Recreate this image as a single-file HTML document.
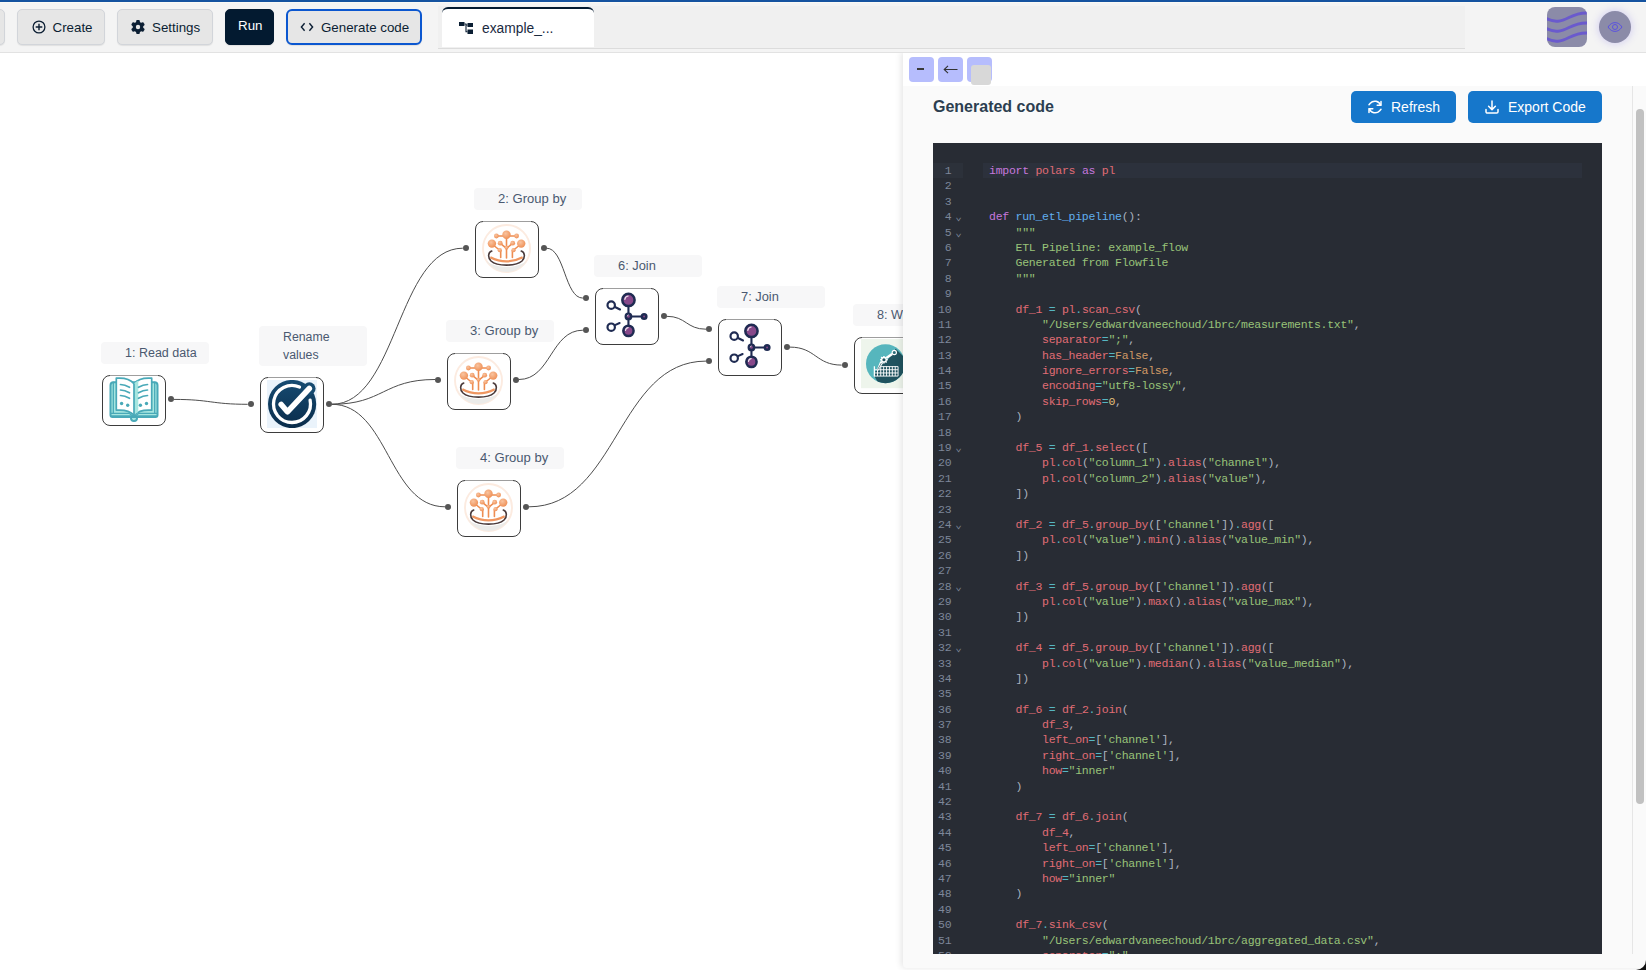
<!DOCTYPE html>
<html>
<head>
<meta charset="utf-8">
<title>Flow designer</title>
<style>
*{box-sizing:border-box;margin:0;padding:0}
html,body{width:1646px;height:970px;overflow:hidden;background:#fff;font-family:"Liberation Sans",sans-serif}
#app{position:relative;width:1646px;height:970px;overflow:hidden;background:#fff}
.abs{position:absolute}
/* top bar */
#topline{left:0;top:0;width:1646px;height:2px;background:#1553a0}
#header{left:0;top:2px;width:1646px;height:51px;background:#f4f4f4;border-bottom:1px solid #e2e2e2;border-top:1px solid #fafaf6}
.btn{position:absolute;top:9px;height:36px;background:#e6e6e6;border:1px solid #d2d5da;border-radius:5px;box-shadow:0 1px 1px rgba(0,0,0,.08);color:#0b1e33;font-size:13.33px;line-height:34px;white-space:nowrap}
.btn span{position:absolute;top:1px}
#run{background:#031a30;border-color:#031a30;color:#fff}
#run span{top:-1px}
#gen{border:2px solid #0b57d0;border-radius:6px;line-height:32px}
#strip{left:438px;top:6px;width:1027px;height:43px;background:#f0f0f0;border-bottom:1px solid #dcdcdc}
#tab{left:442px;top:7px;width:152px;height:40px;background:#fff;border-top:2px solid #031a30;border-radius:6px 6px 0 0;font-size:14px;color:#1a2a3f}
/* canvas */
.lbl{position:absolute;width:108px;height:22px;background:#f7f7f8;border-radius:4px;font-size:12.400px;line-height:22px;color:#4a5970;white-space:nowrap}
.node{position:absolute;width:64px;height:57px;background:#fff;border:1px solid #3d3d3d;border-radius:8px}
.node:before{content:'';position:absolute;left:7px;right:7px;top:-1px;height:1px;background:rgba(255,255,255,.5)}
.hd{position:absolute;width:6px;height:6px;border-radius:50%;background:#555}
/* panel */
#panel{left:903px;top:52px;width:743px;height:916px;background:#fafafa;box-shadow:-2px 0 6px rgba(0,0,0,.10);border-radius:0 0 0 4px}
#ptop{left:0;top:0;width:743px;height:34px;background:#fff}
.pb{position:absolute;top:5px;width:25px;height:25px;background:#b6bdfd;border-radius:4px}
#title{left:30px;top:46px;font-size:16px;font-weight:bold;color:#2c3e50;white-space:nowrap}
.bbtn{position:absolute;top:39px;height:32px;background:#1677cb;border-radius:5px;color:#fff;font-size:14px;line-height:32px;white-space:nowrap}
.bbtn span{position:absolute;top:0}
#sbar{left:729px;top:34px;width:14px;height:868px;border-left:1px solid #e6e6e6;background:#fafafa}
#thumb{left:733px;top:57px;width:8px;height:695px;border-radius:4px;background:#c1c1c1}
#code{left:30px;top:91px;width:669px;height:811px;background:#282c34;overflow:hidden;font-family:"Liberation Mono",monospace;font-size:11.500px;letter-spacing:-.27px;color:#abb2bf}
#gut{left:0;top:20px;width:30px}
.gl{position:relative;height:15.4px;line-height:16.8px;color:#7d8799;white-space:pre}
.gl b{position:absolute;right:11.700px;top:0;font-weight:normal}
.gl i{position:absolute;left:22.300px;top:.1px;font-style:normal;font-size:11px;letter-spacing:0}
.ga{background:#2c313a}
#lines{left:50px;top:20px;width:599px}
.cl{height:15.4px;line-height:16.8px;padding-left:6px;white-space:pre}
.ca{background:#2c313c}
.k{color:#c678dd}.v{color:#e06c75}.f{color:#61afef}.s{color:#98c379}.o{color:#56b6c2}.a{color:#d19a66}.n{color:#e5c07b}
</style>
</head>
<body>
<div id="app">
  <!-- CANVAS -->
  <div id="canvas" class="abs" style="left:0;top:0;width:903px;height:970px;overflow:hidden">

<svg width="0" height="0" style="position:absolute">
<defs>
<radialGradient id="og" cx="40%" cy="35%" r="70%"><stop offset="0" stop-color="#f9c4a0"/><stop offset="1" stop-color="#ee8d52"/></radialGradient>
<linearGradient id="rg" x1="0" y1="0" x2="0" y2="1"><stop offset="0" stop-color="#164b72"/><stop offset="1" stop-color="#0a2c4a"/></linearGradient>
<clipPath id="gc"><circle cx="24" cy="24" r="23.500"/></clipPath>
<clipPath id="wc"><circle cx="20" cy="20" r="20"/></clipPath>
<symbol id="groupby" viewBox="-0.5 -0.5 49 49">
  <circle cx="24" cy="24" r="23.500" fill="#fff" stroke="#fcebe0" stroke-width="1.900"/>
  <g clip-path="url(#gc)"><path d="M0 32C8 46 40 46 48 32V48H0z" fill="#ebebe9"/></g>
  <g stroke="#ee8d52" stroke-width="1.600" fill="none" stroke-linecap="round">
    <path d="M24 10v23.500"/><path d="M14 11.500h20"/>
    <path d="M18.200 26.500v6.500M29.900 26.500v6.500"/>
    <path d="M9.500 19.500l8 6.500M38.500 19.500l-8 6.500"/>
    <path d="M17.800 18.800l6.200 5M30.200 18.800l-6.200 5"/>
  </g>
  <g fill="url(#og)">
    <circle cx="24" cy="10.300" r="4.200"/><circle cx="13.900" cy="11.500" r="2.400"/><circle cx="34.100" cy="11.500" r="2.400"/>
    <circle cx="9.400" cy="19.100" r="4.200"/><circle cx="38.700" cy="19.100" r="4.200"/>
    <circle cx="17.700" cy="18.700" r="2.400"/><circle cx="30.200" cy="18.700" r="2.400"/>
    <circle cx="24" cy="23.200" r="1.900"/><circle cx="17.300" cy="25.700" r="2.100"/><circle cx="31" cy="25.700" r="2.100"/>
  </g>
  <path d="M7.800 32.700Q24 41.100 40.200 32.700" fill="none" stroke="#ef9660" stroke-width="2.300"/>
  <path d="M9.200 26.600C5.500 28 5 33 8.500 36.500C14.500 42 33.500 42 39.500 36.500C43 33 42.500 28 38.800 26.600" fill="none" stroke="#4b3b3b" stroke-width="1.600" stroke-linecap="round"/>
</symbol>
<symbol id="join" viewBox="0 0 62 55">
  <g stroke="#1f2b52" stroke-width="2.100" fill="none" stroke-linecap="round">
    <path d="M32.450 11V42M32.450 27.440H48"/>
    <path d="M19.500 18.200l4.500 2.300M19.500 35.900l4.100-1.900"/>
  </g>
  <circle cx="32.450" cy="10.950" r="6.150" fill="#87488a" stroke="#1f2b52" stroke-width="2.500"/>
  <path d="M28.800 10.400a3.800 3.800 0 0 1 3.300-3.400" fill="none" stroke="#fff" stroke-width="1.200" stroke-linecap="round" opacity=".85"/>
  <circle cx="32.450" cy="41.870" r="5.150" fill="#87488a" stroke="#1f2b52" stroke-width="2.500"/>
  <path d="M29.500 41.400a3.100 3.100 0 0 1 2.700-2.800" fill="none" stroke="#fff" stroke-width="1.100" stroke-linecap="round" opacity=".85"/>
  <circle cx="32.450" cy="27.440" r="2.650" fill="#87488a" stroke="#1f2b52" stroke-width="2.500"/>
  <path d="M31.200 27a1.400 1.400 0 0 1 1.100-1.200" fill="none" stroke="#fff" stroke-width=".8" stroke-linecap="round" opacity=".8"/>
  <circle cx="48.100" cy="27.440" r="2.250" fill="#87488a" stroke="#1f2b52" stroke-width="2.500"/>
  <circle cx="15.200" cy="16.140" r="3.700" fill="#fff" stroke="#1f2b52" stroke-width="2.200"/>
  <circle cx="15.200" cy="38.200" r="3.700" fill="#fff" stroke="#1f2b52" stroke-width="2.200"/>
</symbol>
<symbol id="book" viewBox="0 0 50 45">
  <path d="M0.500 8.200a4 4 0 0 1 4-4H45.500a4 4 0 0 1 4 4V38a3 3 0 0 1-3 3H29a4 4 0 0 1-8 0H3.500a3 3 0 0 1-3-3z" fill="#49a9b8"/>
  <path d="M2.500 8.200a2 2 0 0 1 2-2H45.500a2 2 0 0 1 2 2V38.300H2.500z" fill="#a6e6e0"/>
  <path d="M2 36.300H20l5 3.500l5-3.500H48" fill="none" stroke="#49a9b8" stroke-width="1.200"/>
  <path d="M4.300 4.700V36M45.700 4.700V36" stroke="#49a9b8" stroke-width="1.300" fill="none"/>
  <path d="M7.300 1.200C14 .6 21 2 25 6.600C29 2 36 .6 42.700 1.200V33.200C36 32.600 29 34 25 38C21 34 14 32.600 7.300 33.200z" fill="#fff" stroke="#49a9b8" stroke-width="1.700" stroke-linejoin="round"/>
  <path d="M25 6.600C26.500 5 28 4 29.300 3.400V35C28 35.600 26.500 36.600 25 38z" fill="#a6e6e0"/>
  <path d="M25 6.600V42" stroke="#49a9b8" stroke-width="1.700" fill="none"/>
  <path d="M22.300 41a2.700 2.700 0 0 0 5.400 0" fill="#a6e6e0" stroke="#49a9b8" stroke-width="1.300"/>
  <g stroke="#49a9b8" stroke-width="1.700" fill="none" stroke-linecap="round">
    <path d="M11.500 7.500C15 7.500 18 8.800 20.500 10.300M11.500 13C15 13 18 14.300 20.500 15.800M11.500 18.500C15 18.500 18 19.800 20.500 21.300"/>
    <path d="M38.500 7.500C35 7.500 32 8.800 29.500 10.300M38.500 13C35 13 32 14.300 29.500 15.800M38.500 18.500C35 18.500 32 19.800 29.500 21.300"/>
  </g>
  <g fill="#49a9b8"><circle cx="12.600" cy="26.500" r="1.700"/><circle cx="18.700" cy="28.200" r="1.700"/><circle cx="31.400" cy="28.200" r="1.700"/><circle cx="37.500" cy="26.500" r="1.700"/></g>
</symbol>
<symbol id="rename" viewBox="0 0 50 48">
  <rect width="50" height="48" fill="#eaf3fb"/>
  <circle cx="25.100" cy="24.050" r="24.100" fill="url(#rg)"/>
  <circle cx="42.300" cy="8.600" r="6.300" fill="#154a70"/>
  <path d="M32.500 7.100A18.500 18.500 0 1 0 43.100 20.150" fill="none" stroke="#fff" stroke-width="3.300" stroke-linecap="round"/>
  <path d="M14.200 24.500L20.400 31.800L42.300 8.500" fill="none" stroke="#fff" stroke-width="5.600" stroke-linecap="round" stroke-linejoin="round"/>
</symbol>
<symbol id="write" viewBox="0 0 52 49.400">
  <rect width="52" height="49.400" fill="#eef5ec"/>
  <g transform="translate(5 5.300) scale(.975)">
    <circle cx="20" cy="20" r="20" fill="#56b6bd"/>
    <g clip-path="url(#wc)"><path d="M30.500 4.500L52 26V52H20L8.400 32.600V29L13 25L17 19L22 16z" fill="#20535f"/></g>
    <g fill="none" stroke="#fff" stroke-width=".95"><path d="M8.400 26.100H32.900M8.400 29.400H32.900M8.400 32.600H32.900M15.100 22.900H32.900V32.600"/><path d="M11.800 26.100v6.500M15.100 22.900v9.700M18.100 22.900v9.700M21.100 22.900v9.700M24 22.900v9.700M27 22.900v9.700M30 22.900v9.700"/></g>
    <path d="M8.600 22.500v10.600" stroke="#fff" stroke-width="1.300"/>
    <path d="M14.600 17.300L17.600 19.300L12.300 27.300L10.900 26.600z" fill="#fff"/>
    <path d="M15.800 19.200L12 25.800" stroke="#20535f" stroke-width=".7"/>
    <g stroke="#fff" stroke-width="1.500"><path d="M18.400 11.900v7.800M14.500 15.800h7.800M15.600 13l5.600 5.600M21.200 13l-5.600 5.600"/></g>
    <circle cx="18.400" cy="15.800" r="2.900" fill="#fff"/>
    <circle cx="18.400" cy="15.800" r="1.600" fill="#20535f"/>
    <path d="M21.300 13.800L26.800 10" stroke="#fff" stroke-width="2.500"/>
    <circle cx="29" cy="8.400" r="2.200" fill="#2b6d78" stroke="#fff" stroke-width="1.200"/>
  </g>
</symbol>
</defs>
</svg>

<div class="abs" style="left:0;top:0;width:903px;height:970px">
<svg class="abs" style="left:0;top:0" width="903" height="970" viewBox="0 0 903 970"><g fill="none" stroke="#4d4d4d" stroke-width="1"><path d="M173.8 399.4C210.8 399.4 210.8 404.3 247.7 404.3"/><path d="M331.8 404.3C397.3 404.3 397.3 248.2 462.8 248.2"/><path d="M331.8 404.3C383.4 404.3 383.4 379.5 435.0 379.5"/><path d="M331.8 404.3C388.4 404.3 388.4 506.8 445.0 506.8"/><path d="M546.5 248.2C564.7 248.2 564.7 298.1 582.9 298.1"/><path d="M518.9 379.5C550.9 379.5 550.9 330.2 582.9 330.2"/><path d="M666.6 316.3C686.3 316.3 686.3 329.2 706.0 329.2"/><path d="M529.0 506.8C617.5 506.8 617.5 361.1 706.0 361.1"/><path d="M789.8 347.1C815.8 347.1 815.8 365.1 841.7 365.1"/></g></svg>
<div class="lbl" style="left:101px;top:341.5px;padding-left:24px;font-size:12.5px">1: Read data</div>
<div class="node" style="left:102px;top:375px;width:64px;height:51px"><svg class="abs" style="left:6px;top:1.0px" width="50" height="45"><use href="#book"/></svg></div>
<div class="lbl" style="left:259px;top:325.5px;height:40px;line-height:18px;padding:2px 0 0 24px;font-size:12.3px">Rename<br>values</div>
<div class="node" style="left:260px;top:377px;width:64px;height:56px"><svg class="abs" style="left:6px;top:2.3px" width="50" height="48"><use href="#rename"/></svg></div>
<div class="lbl" style="left:474px;top:187.5px;padding-left:24px;font-size:13.05px">2: Group by</div>
<div class="node" style="left:475px;top:221px;width:64px;height:57px"><svg class="abs" style="left:6px;top:1.9px" width="49" height="49"><use href="#groupby"/></svg></div>
<div class="lbl" style="left:446px;top:319.5px;padding-left:24px;font-size:13.05px">3: Group by</div>
<div class="node" style="left:447px;top:353px;width:64px;height:57px"><svg class="abs" style="left:6px;top:1.9px" width="49" height="49"><use href="#groupby"/></svg></div>
<div class="lbl" style="left:456px;top:446.5px;padding-left:24px;font-size:13.05px">4: Group by</div>
<div class="node" style="left:457px;top:480px;width:64px;height:57px"><svg class="abs" style="left:6px;top:1.9px" width="49" height="49"><use href="#groupby"/></svg></div>
<div class="lbl" style="left:594px;top:254.5px;padding-left:24px;font-size:12.85px">6: Join</div>
<div class="node" style="left:595px;top:288px;width:64px;height:57px"><svg class="abs" style="left:0px;top:0px" width="62" height="55"><use href="#join"/></svg></div>
<div class="lbl" style="left:717px;top:285.5px;padding-left:24px;font-size:12.85px">7: Join</div>
<div class="node" style="left:718px;top:319px;width:64px;height:57px"><svg class="abs" style="left:0px;top:0px" width="62" height="55"><use href="#join"/></svg></div>
<div class="lbl" style="left:853px;top:303.5px;padding-left:24px;font-size:12.7px">8: Write data</div>
<div class="node" style="left:854px;top:337px;width:64px;height:57px"><svg class="abs" style="left:5.9px;top:1.3px" width="52" height="49.4"><use href="#write"/></svg></div>
<div class="hd" style="left:167.8px;top:396.4px"></div>
<div class="hd" style="left:247.7px;top:401.3px"></div>
<div class="hd" style="left:325.8px;top:401.3px"></div>
<div class="hd" style="left:462.8px;top:245.2px"></div>
<div class="hd" style="left:540.5px;top:245.2px"></div>
<div class="hd" style="left:435.0px;top:376.5px"></div>
<div class="hd" style="left:512.9px;top:376.5px"></div>
<div class="hd" style="left:445.0px;top:503.8px"></div>
<div class="hd" style="left:523.0px;top:503.8px"></div>
<div class="hd" style="left:582.9px;top:295.1px"></div>
<div class="hd" style="left:582.9px;top:327.2px"></div>
<div class="hd" style="left:660.6px;top:313.3px"></div>
<div class="hd" style="left:706.0px;top:326.2px"></div>
<div class="hd" style="left:706.0px;top:358.1px"></div>
<div class="hd" style="left:783.8px;top:344.1px"></div>
<div class="hd" style="left:841.7px;top:362.1px"></div>
</div>
  </div>

  <!-- PANEL -->
  <div id="panel" class="abs">
    <div id="ptop" class="abs"></div>
    <div class="pb" style="left:6px"><div class="abs" style="left:8px;top:11px;width:7px;height:2px;background:#3a3a3a"></div></div>
    <div class="pb" style="left:35px"><svg class="abs" style="left:5px;top:7px" width="15" height="11" viewBox="0 0 15 11"><path d="M14.500 5.500H1.200M5 1.800L1.200 5.500L5 9.200" fill="none" stroke="#333" stroke-width="1.100"/></svg></div>
    <div class="pb" style="left:64px"></div>
    <div class="abs" style="left:68px;top:13px;width:20px;height:20px;background:#d8d8d8;border-radius:3px"></div>
    <div id="title" class="abs">Generated code</div>
    <div class="bbtn" style="left:448px;width:105px">
      <svg class="abs" style="left:16px;top:8px" width="16" height="16" viewBox="0 0 16 16"><g fill="none" stroke="#fff" stroke-width="1.500" stroke-linecap="round" stroke-linejoin="round"><path d="M14 2.500v3.800h-3.800"/><path d="M2 13.500V9.700h3.800"/><path d="M13.600 6.300A6 6 0 0 0 3.300 4.300L2 5.800M14 10.200l-1.300 1.500A6 6 0 0 1 2.400 9.700"/></g></svg>
      <span style="left:40px">Refresh</span>
    </div>
    <div class="bbtn" style="left:565px;width:134px">
      <svg class="abs" style="left:16px;top:8px" width="16" height="16" viewBox="0 0 16 16"><g fill="none" stroke="#fff" stroke-width="1.500" stroke-linecap="round" stroke-linejoin="round"><path d="M8 2v8.500M4.600 7.200L8 10.600l3.400-3.400M2 10.500v2.200a1.300 1.300 0 0 0 1.300 1.300h9.400a1.300 1.300 0 0 0 1.300-1.300v-2.200"/></g></svg>
      <span style="left:40px">Export Code</span>
    </div>
    <div id="code" class="abs">
      <div id="gut" class="abs">
<div class="gl ga"><b>1</b></div>
<div class="gl"><b>2</b></div>
<div class="gl"><b>3</b></div>
<div class="gl"><b>4</b><i>&#8964;</i></div>
<div class="gl"><b>5</b><i>&#8964;</i></div>
<div class="gl"><b>6</b></div>
<div class="gl"><b>7</b></div>
<div class="gl"><b>8</b></div>
<div class="gl"><b>9</b></div>
<div class="gl"><b>10</b></div>
<div class="gl"><b>11</b></div>
<div class="gl"><b>12</b></div>
<div class="gl"><b>13</b></div>
<div class="gl"><b>14</b></div>
<div class="gl"><b>15</b></div>
<div class="gl"><b>16</b></div>
<div class="gl"><b>17</b></div>
<div class="gl"><b>18</b></div>
<div class="gl"><b>19</b><i>&#8964;</i></div>
<div class="gl"><b>20</b></div>
<div class="gl"><b>21</b></div>
<div class="gl"><b>22</b></div>
<div class="gl"><b>23</b></div>
<div class="gl"><b>24</b><i>&#8964;</i></div>
<div class="gl"><b>25</b></div>
<div class="gl"><b>26</b></div>
<div class="gl"><b>27</b></div>
<div class="gl"><b>28</b><i>&#8964;</i></div>
<div class="gl"><b>29</b></div>
<div class="gl"><b>30</b></div>
<div class="gl"><b>31</b></div>
<div class="gl"><b>32</b><i>&#8964;</i></div>
<div class="gl"><b>33</b></div>
<div class="gl"><b>34</b></div>
<div class="gl"><b>35</b></div>
<div class="gl"><b>36</b></div>
<div class="gl"><b>37</b></div>
<div class="gl"><b>38</b></div>
<div class="gl"><b>39</b></div>
<div class="gl"><b>40</b></div>
<div class="gl"><b>41</b></div>
<div class="gl"><b>42</b></div>
<div class="gl"><b>43</b></div>
<div class="gl"><b>44</b></div>
<div class="gl"><b>45</b></div>
<div class="gl"><b>46</b></div>
<div class="gl"><b>47</b></div>
<div class="gl"><b>48</b></div>
<div class="gl"><b>49</b></div>
<div class="gl"><b>50</b></div>
<div class="gl"><b>51</b></div>
<div class="gl"><b>52</b></div>
      </div>
      <div id="lines" class="abs">
<div class="cl ca"><span class="k">import</span> <span class="v">polars</span> <span class="k">as</span> <span class="v">pl</span></div>
<div class="cl"></div>
<div class="cl"></div>
<div class="cl"><span class="k">def</span> <span class="f">run_etl_pipeline</span>():</div>
<div class="cl">    <span class="s">"""</span></div>
<div class="cl">    <span class="s">ETL Pipeline: example_flow</span></div>
<div class="cl">    <span class="s">Generated from Flowfile</span></div>
<div class="cl">    <span class="s">"""</span></div>
<div class="cl"></div>
<div class="cl">    <span class="v">df_1</span> <span class="o">=</span> <span class="v">pl</span><span class="o">.</span><span class="v">scan_csv</span>(</div>
<div class="cl">        <span class="s">"/Users/edwardvaneechoud/1brc/measurements.txt"</span>,</div>
<div class="cl">        <span class="v">separator</span><span class="o">=</span><span class="s">";"</span>,</div>
<div class="cl">        <span class="v">has_header</span><span class="o">=</span><span class="a">False</span>,</div>
<div class="cl">        <span class="v">ignore_errors</span><span class="o">=</span><span class="a">False</span>,</div>
<div class="cl">        <span class="v">encoding</span><span class="o">=</span><span class="s">"utf8-lossy"</span>,</div>
<div class="cl">        <span class="v">skip_rows</span><span class="o">=</span><span class="n">0</span>,</div>
<div class="cl">    )</div>
<div class="cl"></div>
<div class="cl">    <span class="v">df_5</span> <span class="o">=</span> <span class="v">df_1</span><span class="o">.</span><span class="v">select</span>([</div>
<div class="cl">        <span class="v">pl</span><span class="o">.</span><span class="v">col</span>(<span class="s">"column_1"</span>)<span class="o">.</span><span class="v">alias</span>(<span class="s">"channel"</span>),</div>
<div class="cl">        <span class="v">pl</span><span class="o">.</span><span class="v">col</span>(<span class="s">"column_2"</span>)<span class="o">.</span><span class="v">alias</span>(<span class="s">"value"</span>),</div>
<div class="cl">    ])</div>
<div class="cl"></div>
<div class="cl">    <span class="v">df_2</span> <span class="o">=</span> <span class="v">df_5</span><span class="o">.</span><span class="v">group_by</span>([<span class="s">'channel'</span>])<span class="o">.</span><span class="v">agg</span>([</div>
<div class="cl">        <span class="v">pl</span><span class="o">.</span><span class="v">col</span>(<span class="s">"value"</span>)<span class="o">.</span><span class="v">min</span>()<span class="o">.</span><span class="v">alias</span>(<span class="s">"value_min"</span>),</div>
<div class="cl">    ])</div>
<div class="cl"></div>
<div class="cl">    <span class="v">df_3</span> <span class="o">=</span> <span class="v">df_5</span><span class="o">.</span><span class="v">group_by</span>([<span class="s">'channel'</span>])<span class="o">.</span><span class="v">agg</span>([</div>
<div class="cl">        <span class="v">pl</span><span class="o">.</span><span class="v">col</span>(<span class="s">"value"</span>)<span class="o">.</span><span class="v">max</span>()<span class="o">.</span><span class="v">alias</span>(<span class="s">"value_max"</span>),</div>
<div class="cl">    ])</div>
<div class="cl"></div>
<div class="cl">    <span class="v">df_4</span> <span class="o">=</span> <span class="v">df_5</span><span class="o">.</span><span class="v">group_by</span>([<span class="s">'channel'</span>])<span class="o">.</span><span class="v">agg</span>([</div>
<div class="cl">        <span class="v">pl</span><span class="o">.</span><span class="v">col</span>(<span class="s">"value"</span>)<span class="o">.</span><span class="v">median</span>()<span class="o">.</span><span class="v">alias</span>(<span class="s">"value_median"</span>),</div>
<div class="cl">    ])</div>
<div class="cl"></div>
<div class="cl">    <span class="v">df_6</span> <span class="o">=</span> <span class="v">df_2</span><span class="o">.</span><span class="v">join</span>(</div>
<div class="cl">        <span class="v">df_3</span>,</div>
<div class="cl">        <span class="v">left_on</span><span class="o">=</span>[<span class="s">'channel'</span>],</div>
<div class="cl">        <span class="v">right_on</span><span class="o">=</span>[<span class="s">'channel'</span>],</div>
<div class="cl">        <span class="v">how</span><span class="o">=</span><span class="s">"inner"</span></div>
<div class="cl">    )</div>
<div class="cl"></div>
<div class="cl">    <span class="v">df_7</span> <span class="o">=</span> <span class="v">df_6</span><span class="o">.</span><span class="v">join</span>(</div>
<div class="cl">        <span class="v">df_4</span>,</div>
<div class="cl">        <span class="v">left_on</span><span class="o">=</span>[<span class="s">'channel'</span>],</div>
<div class="cl">        <span class="v">right_on</span><span class="o">=</span>[<span class="s">'channel'</span>],</div>
<div class="cl">        <span class="v">how</span><span class="o">=</span><span class="s">"inner"</span></div>
<div class="cl">    )</div>
<div class="cl"></div>
<div class="cl">    <span class="v">df_7</span><span class="o">.</span><span class="v">sink_csv</span>(</div>
<div class="cl">        <span class="s">"/Users/edwardvaneechoud/1brc/aggregated_data.csv"</span>,</div>
<div class="cl">        <span class="v">separator</span><span class="o">=</span><span class="s">";"</span>,</div>
      </div>
    </div>
    <div id="sbar" class="abs"></div>
    <div id="thumb" class="abs"></div>
  </div>
  <!-- HEADER -->
  <div id="header" class="abs"></div>
  <div id="topline" class="abs"></div>
  <div class="btn" style="left:-20px;width:25px"></div>
  <div class="btn" id="create" style="left:17px;width:88px">
    <svg class="abs" style="left:14px;top:10px" width="14" height="14" viewBox="0 0 14 14"><circle cx="7" cy="7" r="5.9" fill="none" stroke="#0b1e33" stroke-width="1.3"/><path d="M7 3.700v6.600M3.700 7h6.600" stroke="#0b1e33" stroke-width="1.400" fill="none"/></svg>
    <span style="left:34.500px">Create</span>
  </div>
  <div class="btn" id="settings" style="left:117px;width:96px">
    <svg class="abs" style="left:13px;top:10px" width="14" height="14" viewBox="0 0 512 512"><path fill="#0b1e33" d="M495.9 166.600c3.200 8.700.5 18.400-6.400 24.600l-43.300 39.400c1.100 8.300 1.700 16.800 1.700 25.400s-.6 17.100-1.700 25.400l43.300 39.400c6.900 6.200 9.600 15.900 6.400 24.600-4.400 11.900-9.700 23.300-15.800 34.300l-4.700 8.100c-6.600 11-14 21.400-22.100 31.200-5.900 7.200-15.700 9.600-24.500 6.800l-55.700-17.700c-13.400 10.300-28.200 18.900-44 25.400l-12.500 57.100c-2 9.100-9 16.300-18.200 17.800-13.800 2.300-28 3.500-42.500 3.500s-28.700-1.200-42.500-3.500c-9.200-1.500-16.200-8.700-18.200-17.800l-12.500-57.100c-15.800-6.500-30.600-15.100-44-25.400l-55.600 17.800c-8.800 2.800-18.600.3-24.500-6.800-8.100-9.800-15.500-20.200-22.100-31.200l-4.700-8.100c-6.100-11-11.400-22.400-15.800-34.300-3.200-8.700-.5-18.400 6.400-24.600l43.300-39.400c-1.100-8.400-1.700-16.900-1.700-25.500s.6-17.100 1.700-25.400l-43.300-39.400c-6.900-6.200-9.600-15.900-6.400-24.600 4.400-11.900 9.700-23.300 15.800-34.300l4.700-8.100c6.600-11 14-21.400 22.100-31.200 5.900-7.200 15.700-9.600 24.500-6.800l55.700 17.700c13.400-10.300 28.200-18.900 44-25.400l12.500-57.100c2-9.100 9-16.300 18.200-17.800C227.300 1.200 241.500 0 256 0s28.700 1.200 42.500 3.500c9.200 1.500 16.200 8.700 18.200 17.800l12.500 57.100c15.800 6.500 30.600 15.100 44 25.400l55.700-17.700c8.800-2.800 18.600-.3 24.500 6.800 8.100 9.800 15.500 20.200 22.100 31.200l4.700 8.100c6.100 11 11.400 22.400 15.800 34.300zM256 336a80 80 0 1 0 0-160 80 80 0 1 0 0 160z"/></svg>
    <span style="left:34px">Settings</span>
  </div>
  <div class="btn" id="run" style="left:225px;width:49px"><span style="left:12px">Run</span></div>
  <div class="btn" id="gen" style="left:286px;width:136px">
    <svg class="abs" style="left:12px;top:10px" width="14" height="12" viewBox="0 0 14 12"><path d="M4.6 2.3L1.4 6l3.200 3.700M9.400 2.300L12.600 6l-3.200 3.700" fill="none" stroke="#0b1e33" stroke-width="1.4"/></svg>
    <span style="left:33px">Generate code</span>
  </div>
  <div id="strip" class="abs"></div>
  <div id="tab" class="abs">
    <svg class="abs" style="left:17px;top:13px" width="14" height="12" viewBox="0 0 14 12"><path fill="#0b1e33" d="M0 0h5.500v4H0zM8.500 1H14v4H8.500zM8.500 7.500H14V12H8.500z"/><path d="M5.500 2H7v7.800h1.500M7 3h1.500" fill="none" stroke="#0b1e33" stroke-width="1.1"/></svg>
    <span class="abs" style="left:40px;top:12px;white-space:nowrap;font-size:13.800px">example_...</span>
  </div>
  <!-- logo + eye -->
  <div class="abs" style="left:1547px;top:7px;width:40px;height:40px;border-radius:8px;background:#8b8ba8;overflow:hidden">
    <svg width="40" height="40" viewBox="0 0 40 40"><g fill="none" stroke="#6a5acd" stroke-width="3"><path d="M-1 11.500C8 16 14 14.500 22 10.500S34 5.500 41 6"/><path d="M-1 21.500C8 26 14 24.500 22 20.500S34 15.500 41 16"/><path d="M-1 31.500C8 36 14 34.500 22 30.500S34 25.500 41 26"/></g></svg>
  </div>
  <div class="abs" style="left:1599px;top:11px;width:32px;height:32px;border-radius:50%;background:#8b8ba8;box-shadow:0 0 8px rgba(108,92,231,.30)">
    <svg class="abs" style="left:8px;top:10px" width="16" height="12" viewBox="0 0 16 12"><path d="M1 6C3 3 5.300 1.600 8 1.600S13 3 15 6C13 9 10.700 10.400 8 10.400S3 9 1 6z" fill="none" stroke="#5b52e0" stroke-width="1"/><circle cx="8" cy="6" r="2.500" fill="none" stroke="#5b52e0" stroke-width="1"/></svg>
  </div>

  <!-- window corner -->
  <svg class="abs" style="left:1636px;top:960px" width="10" height="10" viewBox="0 0 10 10"><path d="M10 0V10H0A10 10 0 0 0 10 0z" fill="#111"/></svg>
</div>
</body>
</html>
